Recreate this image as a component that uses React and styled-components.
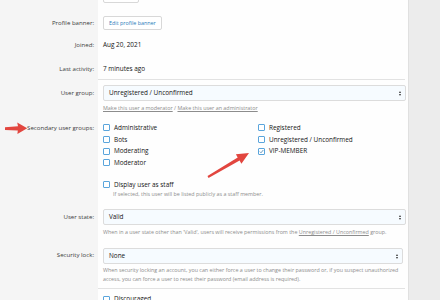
import React from 'react';
import styled, { createGlobalStyle } from 'styled-components';

const GlobalStyle = createGlobalStyle`
  html, body {
    margin: 0;
    padding: 0;
    background: #ececec;
    font-family: "Open Sans", "Noto Sans", sans-serif;
    overflow: hidden;
  }
`;

const Page = styled.div`
  position: relative;
  width: 408px;
  height: 300px;
  overflow: hidden;
  background: #fefefe;
  border-right: 1px solid #e0e0e0;
`;

const Form = styled.div`
  display: flex;
  flex-direction: column;
  height: 320px;
  margin-top: -11px;
`;

const Row = styled.div`
  display: grid;
  grid-template-columns: 98px minmax(0, 1fr);
  flex: ${(p) => (p.$fill ? '1' : 'none')};
`;

const Label = styled.div`
  background: #f5f5f5;
  color: #3c3c3c;
  font-size: 6.1px;
  text-align: right;
  padding-right: 4px;
  padding-top: ${(p) => p.$top || 0}px;
  line-height: 12px;
  white-space: nowrap;
`;

const Cell = styled.div`
  min-width: 0;
  padding: ${(p) => p.$top || 0}px 2px ${(p) => p.$bottom || 0}px 5px;
  font-size: 6.4px;
  color: #141414;
  line-height: 12px;
  border-bottom: ${(p) => (p.$sep ? '1px solid #e2e2e2' : 'none')};
  margin-right: ${(p) => (p.$sep ? '3px' : '0')};
`;

const Button = styled.div`
  display: flex;
  align-items: center;
  width: max-content;
  height: 12px;
  padding: 0 5px;
  border: 1px solid #d8d8d8;
  border-radius: 2px;
  background: #fff;
  color: #2b7bb9;
  font-size: 5.4px;
  min-width: ${(p) => p.$w || 0}px;
`;

const Select = styled.div`
  display: flex;
  align-items: center;
  justify-content: space-between;
  height: 14px;
  padding: 0 4px 0 5px;
  border: 1px solid #dcdcdc;
  border-radius: 2px;
  background: #f6fbff;
  color: #141414;
  font-size: 6.4px;
`;

const Caret = styled.span`
  display: inline-flex;
  flex-direction: column;
  gap: 1px;
  &::before, &::after {
    content: '';
    width: 0;
    height: 0;
    border-left: 1.5px solid transparent;
    border-right: 1.5px solid transparent;
  }
  &::before { border-bottom: 2px solid #333; }
  &::after { border-top: 2px solid #333; }
`;

const Links = styled.div`
  font-size: 5.4px;
  color: #8c8c8c;
  line-height: 10px;
  margin-top: 2px;
  a {
    color: #8c8c8c;
    text-decoration: underline;
  }
`;

const Hint = styled.div`
  font-size: 5.35px;
  color: #8c8c8c;
  line-height: 9px;
  margin-top: ${(p) => p.$gap || 0}px;
  padding-left: ${(p) => p.$indent || 0}px;
  white-space: nowrap;
  a { color: #8c8c8c; text-decoration: underline; }
`;

const Columns = styled.div`
  display: grid;
  grid-template-columns: 155px 1fr;
`;

const Check = styled.div`
  display: flex;
  align-items: center;
  gap: 4px;
  height: 11.7px;
  margin-top: ${(p) => p.$gap || 0}px;
  font-size: 6.4px;
  color: #141414;
`;

const Box = styled.span`
  width: 5px;
  height: 5px;
  border: 1px solid #5aa5dc;
  border-radius: 1px;
  background: #fff;
  display: inline-flex;
  align-items: center;
  justify-content: center;
  flex-shrink: 0;
`;

const Arrows = styled.svg`
  position: absolute;
  left: 0;
  top: 0;
  pointer-events: none;
`;

const CheckBox = ({ label, checked, gap }) => (
  <Check $gap={gap}>
    <Box>
      {checked && (
        <svg width="5" height="5" viewBox="0 0 5 5">
          <path d="M0.8 2.6 L2 3.8 L4.3 1" stroke="#5a8fb8" strokeWidth="0.9" fill="none" />
        </svg>
      )}
    </Box>
    {label}
  </Check>
);

const App = () => (
  <Page>
    <GlobalStyle />
    <Form>
      <Row>
        <Label />
        <Cell>
          <Button $w={24} />
        </Cell>
      </Row>
      <Row>
        <Label $top={14}>Profile banner:</Label>
        <Cell $top={13}>
          <Button>Edit profile banner</Button>
        </Cell>
      </Row>
      <Row>
        <Label $top={9}>Joined:</Label>
        <Cell $top={9}>Aug 20, 2021</Cell>
      </Row>
      <Row>
        <Label $top={12}>Last activity:</Label>
        <Cell $top={12} $bottom={4} $sep>7 minutes ago</Cell>
      </Row>
      <Row>
        <Label $top={7}>User group:</Label>
        <Cell $top={5}>
          <Select>
            Unregistered / Unconfirmed
            <Caret />
          </Select>
          <Links>
            <a>Make this user a moderator</a> / <a>Make this user an administrator</a>
          </Links>
        </Cell>
      </Row>
      <Row>
        <Label $top={9}>Secondary user groups:</Label>
        <Cell $top={9}>
          <Columns>
            <div>
              <CheckBox label="Administrative" />
              <CheckBox label="Bots" />
              <CheckBox label="Moderating" />
              <CheckBox label="Moderator" />
            </div>
            <div>
              <CheckBox label="Registered" />
              <CheckBox label="Unregistered / Unconfirmed" />
              <CheckBox label="VIP-MEMBER" checked />
            </div>
          </Columns>
          <CheckBox label="Display user as staff" gap={10} />
          <Hint $indent={10}>If selected, this user will be listed publicly as a staff member.</Hint>
        </Cell>
      </Row>
      <Row>
        <Label $top={12}>User state:</Label>
        <Cell $top={10}>
          <Select>
            Valid
            <Caret />
          </Select>
          <Hint $gap={3}>
            When in a user state other than 'Valid', users will receive permissions from the <a>Unregistered / Unconfirmed</a> group.
          </Hint>
        </Cell>
      </Row>
      <Row>
        <Label $top={12}>Security lock:</Label>
        <Cell $top={11} $bottom={4} $sep>
          <Select>
            None
            <Caret />
          </Select>
          <Hint $gap={2}>
            When security locking an account, you can either force a user to change their password or, if you suspect unauthorized
            <br />
            access, you can force a user to reset their password (email address is required).
          </Hint>
        </Cell>
      </Row>
      <Row $fill>
        <Label />
        <Cell $top={4}>
          <CheckBox label="Discouraged" />
        </Cell>
      </Row>
    </Form>
    <Arrows width="408" height="300" viewBox="0 0 408 300">
      <polygon
        points="5,127.2 18,126.3 17.2,122.4 27.2,128.2 17.4,134 17.8,130.4 5,130"
        fill="#e2463f"
      />
      <polygon
        points="207.5,176.1 237.7,157.5 235.9,154.3 249,153 241.4,163.8 239.6,160.6 208.5,177.9"
        fill="#e2463f"
      />
    </Arrows>
  </Page>
);

export default App;
